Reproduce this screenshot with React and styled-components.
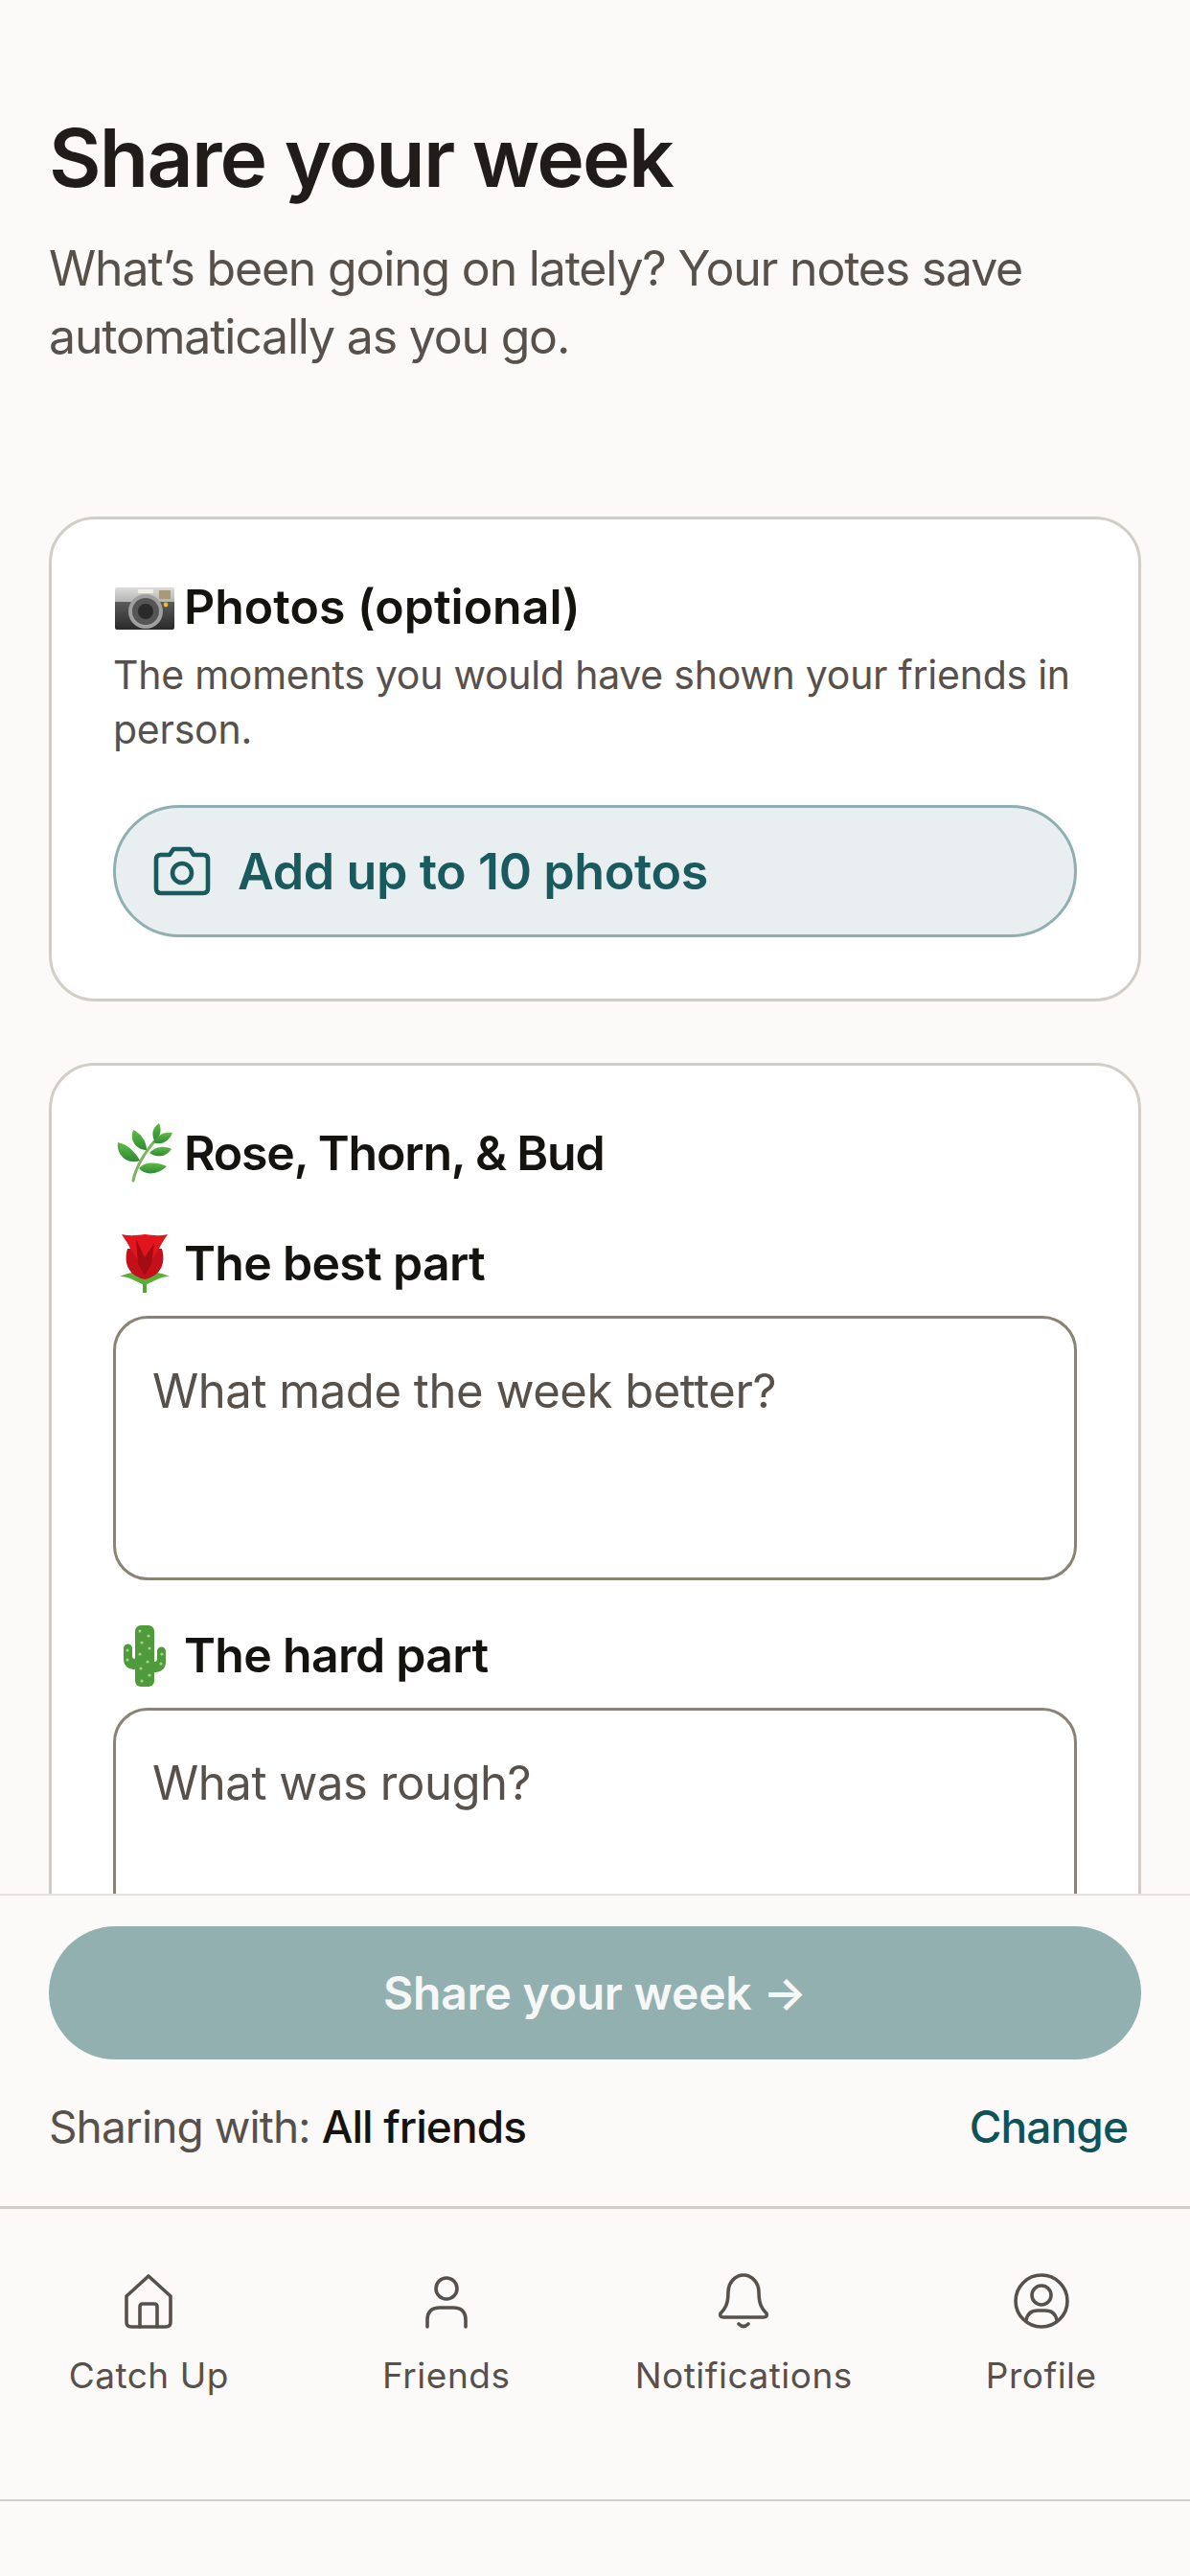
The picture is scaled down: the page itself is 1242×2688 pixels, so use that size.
import React from 'react';
import styled, { createGlobalStyle } from 'styled-components';

const GlobalStyle = createGlobalStyle`
  html, body { margin: 0; padding: 0; background: #fbfaf8; }
  * { box-sizing: border-box; }
  body { font-family: Inter, "Noto Sans", sans-serif; }
`;

const Page = styled.div`
  width: 1242px;
  height: 2688px;
  display: flex;
  flex-direction: column;
  background: #fbfaf8;
  overflow: hidden;
`;

const Scroll = styled.main`
  flex: 1;
  min-height: 0;
  overflow: hidden;
  padding: 115px 51px 0 51px;
`;

const Title = styled.h1`
  margin: 0;
  font-size: 84px;
  line-height: 100px;
  font-weight: 560;
  letter-spacing: -1.8px;
  color: #1f1c1a;
`;

const Intro = styled.p`
  margin: 30px 0 152px;
  font-size: 50px;
  line-height: 71px;
  font-weight: 400;
  letter-spacing: -1.2px;
  color: #57504b;
`;

const Card = styled.section`
  margin-bottom: 64px;
  padding: 58px 64px 64px;
  background: #fff;
  border: 3px solid #d2cec7;
  border-radius: 48px;
`;

const CardTitle = styled.h2`
  margin: 0;
  display: flex;
  align-items: center;
  gap: 8px;
  font-size: 50px;
  line-height: 58px;
  font-weight: 560;
  letter-spacing: ${(p) => p.$spacing}px;
  color: #15130f;
`;

const CardNote = styled.p`
  margin: 10px 0 0;
  font-size: 41px;
  line-height: 57px;
  letter-spacing: -0.25px;
  color: #57504b;
`;

const AddPhotos = styled.button`
  width: 100%;
  height: 138px;
  margin-top: 50px;
  padding: 0 0 0 39px;
  display: flex;
  align-items: center;
  gap: 28px;
  background: #e9eff1;
  border: 3px solid #8fb0b0;
  border-radius: 69px;
  font-family: inherit;
  font-size: 52px;
  font-weight: 560;
  letter-spacing: -0.4px;
  color: #195a5e;
`;

const FieldLabel = styled.label`
  margin-top: ${(p) => p.$top}px;
  display: flex;
  align-items: center;
  gap: 8px;
  font-size: 50px;
  line-height: 58px;
  font-weight: 560;
  letter-spacing: -0.7px;
  color: #15130f;
`;

const NoteBox = styled.textarea`
  display: block;
  width: 100%;
  height: 276px;
  margin-top: 22px;
  padding: 44px 38px;
  resize: none;
  background: #fff;
  border: 3px solid #8a8274;
  border-radius: 36px;
  outline: none;
  font-family: inherit;
  font-size: 49px;
  line-height: 64px;
  letter-spacing: -0.45px;
  &::placeholder {
    color: #57504b;
    opacity: 1;
  }
`;

const ShareBar = styled.div`
  height: 326px;
  flex: none;
  padding: 32px 51px 0 51px;
  background: #fbfaf8;
  border-top: 2px solid #e5e2dd;
`;

const ShareButton = styled.button`
  width: 100%;
  height: 139px;
  padding: 0;
  background: #93b0b1;
  border: none;
  border-radius: 70px;
  font-family: inherit;
  font-size: 48px;
  font-weight: 560;
  letter-spacing: -0.2px;
  color: #f6f8f7;
`;

const ShareMeta = styled.div`
  margin-top: 40px;
  padding-right: 14px;
  display: flex;
  justify-content: space-between;
  align-items: baseline;
  font-size: 46px;
  line-height: 60px;
  letter-spacing: -0.9px;
  color: #57504b;
`;

const Audience = styled.span`
  font-weight: 450;
  color: #15130f;
`;

const ChangeLink = styled.a`
  font-weight: 450;
  color: #0f5257;
`;

const Nav = styled.nav`
  height: 386px;
  flex: none;
  padding-bottom: 78px;
  background: #fbfaf8;
  border-top: 3px solid #d2cec7;
`;

const NavRow = styled.div`
  height: 100%;
  display: grid;
  grid-template-columns: repeat(4, 1fr);
  border-bottom: 2px solid #d2d0cc;
`;

const NavItem = styled.a`
  padding-top: 66px;
  display: flex;
  flex-direction: column;
  align-items: center;
  gap: 23px;
  font-size: 37px;
  line-height: 50px;
  font-weight: 430;
  letter-spacing: 0.5px;
  color: #57504b;
`;

const NavIcon = styled.svg`
  width: 60px;
  height: 60px;
  fill: none;
  stroke: #57504b;
  stroke-width: 3.6;
  stroke-linecap: round;
  stroke-linejoin: round;
`;

const Emoji = styled.svg`
  width: 66px;
  height: 66px;
  flex: none;
`;

function CameraEmoji() {
  return (
    <Emoji viewBox="0 0 66 66">
      <defs>
        <linearGradient id="camBody" x1="0" y1="0" x2="0" y2="1">
          <stop offset="0" stopColor="#dcdcda" />
          <stop offset="0.34" stopColor="#b5b5b3" />
          <stop offset="0.35" stopColor="#5a5a5a" />
          <stop offset="1" stopColor="#2a2a2a" />
        </linearGradient>
      </defs>
      <rect x="2" y="13" width="62" height="44" rx="2" fill="url(#camBody)" />
      <rect x="26" y="15" width="16" height="4" fill="#f2efe4" />
      <rect x="48" y="16" width="12" height="9" fill="#a89a78" />
      <circle cx="34" cy="38" r="18" fill="#a0a0a0" />
      <circle cx="34" cy="38" r="14" fill="#555" />
      <circle cx="34" cy="38" r="8" fill="#2a2a2a" />
      <circle cx="55" cy="31" r="2.4" fill="#efb92f" />
    </Emoji>
  );
}

function HerbEmoji() {
  const leaves = [
    'M28 41 C22 30 14 24 5 22 C3 34 14 46 28 41Z',
    'M35 30 C35 20 28 12 21 9 C17 20 24 30 35 30Z',
    'M43 20 C40 13 41 7 48 2 C51 9 50 16 43 20Z',
    'M42 22 C46 14 54 11 62 12 C59 20 51 26 42 22Z',
    'M38 33 C44 26 54 25 61 29 C55 38 45 38 38 33Z',
    'M27 49 C33 42 46 42 56 47 C47 56 33 57 27 49Z',
  ];
  return (
    <Emoji viewBox="0 0 66 66">
      <defs>
        <linearGradient id="leafFill" x1="0" y1="0" x2="0" y2="1">
          <stop offset="0" stopColor="#5fbc45" />
          <stop offset="1" stopColor="#2c8a33" />
        </linearGradient>
      </defs>
      <path d="M21 62 C24 47 32 34 44 20" fill="none" stroke="#7fb363" strokeWidth="3" strokeLinecap="round" />
      {leaves.map((d, i) => (
        <path key={i} d={d} fill="url(#leafFill)" />
      ))}
    </Emoji>
  );
}

function RoseEmoji() {
  return (
    <Emoji viewBox="0 0 66 66">
      <path d="M31 48 H35 V64 H31Z" fill="#55a533" />
      <path d="M7 47 C17 43 24 41 30 46 L33 38 L36 46 C42 41 49 43 59 47 C49 47 43 52 33 56 C23 52 17 47 7 47Z" fill="#5cae39" />
      <path d="M15 18 C11 32 15 46 33 50 C51 46 55 32 51 18Z" fill="#c4101a" />
      <path d="M9 3 C18 5 25 4 33 3 C41 4 49 5 57 3 C53 9 50 13 48 18 L40 30 L33 44 L26 30 L18 18 C16 13 13 9 9 3Z" fill="#e2151c" />
      <path d="M24 8 L33 27 L43 12 L40 34 L33 46 L26 34Z" fill="#a30c14" />
    </Emoji>
  );
}

function CactusEmoji() {
  return (
    <Emoji viewBox="0 0 66 66">
      <g fill="#4f9a3b">
        <rect x="23" y="2" width="20" height="64" rx="6" />
        <path d="M11 26 a4.5 4.5 0 0 1 9 0 V34 a3 3 0 0 0 3 3 H26 V48 H21 A10 10 0 0 1 11 38Z" />
        <path d="M55 29 a4.5 4.5 0 0 0 -9 0 V37 a3 3 0 0 1 -3 3 H40 V51 H45 A10 10 0 0 0 55 41Z" />
      </g>
      <g fill="#a7d08c">
        {[[28, 8], [37, 13], [30, 20], [38, 26], [28, 32], [36, 40], [29, 47], [38, 54], [30, 60], [15, 28], [15, 38], [51, 32], [50, 42]].map(([x, y]) => (
          <circle key={`${x}-${y}`} cx={x} cy={y} r="1.6" />
        ))}
      </g>
    </Emoji>
  );
}

export default function App() {
  return (
    <Page>
      <GlobalStyle />
      <Scroll>
        <Title>Share your week</Title>
        <Intro>
          What’s been going on lately? Your notes save
          <br />
          automatically as you go.
        </Intro>
        <Card>
          <CardTitle $spacing={0}>
            <CameraEmoji />
            Photos (optional)
          </CardTitle>
          <CardNote>The moments you would have shown your friends in person.</CardNote>
          <AddPhotos type="button">
            <svg width="60" height="52" viewBox="0 0 60 52" fill="none" stroke="#195a5e" strokeWidth="4.6" strokeLinejoin="round">
              <path d="M8 9 H17 L21 3 H38 L42 9 H52 Q57 9 57 14 V44 Q57 49 52 49 H8 Q3 49 3 44 V14 Q3 9 8 9Z" />
              <circle cx="30" cy="28" r="10" />
            </svg>
            Add up to 10 photos
          </AddPhotos>
        </Card>
        <Card>
          <CardTitle $spacing={-1.2}>
            <HerbEmoji />
            Rose, Thorn, &amp; Bud
          </CardTitle>
          <FieldLabel $top={49}>
            <RoseEmoji />
            The best part
          </FieldLabel>
          <NoteBox placeholder="What made the week better?" />
          <FieldLabel $top={45}>
            <CactusEmoji />
            The hard part
          </FieldLabel>
          <NoteBox placeholder="What was rough?" />
        </Card>
      </Scroll>
      <ShareBar>
        <ShareButton type="button">Share your week →</ShareButton>
        <ShareMeta>
          <span>
            Sharing with: <Audience>All friends</Audience>
          </span>
          <ChangeLink>Change</ChangeLink>
        </ShareMeta>
      </ShareBar>
      <Nav>
        <NavRow>
          <NavItem>
            <NavIcon viewBox="0 0 60 60">
              <path d="M7 25 L30 4 L53 25 V52 Q53 57 48 57 H12 Q7 57 7 52Z" />
              <path d="M21 57 V36 Q21 33 24 33 H36 Q39 33 39 36 V57" />
            </NavIcon>
            Catch Up
          </NavItem>
          <NavItem>
            <NavIcon viewBox="0 0 60 60">
              <circle cx="30" cy="17" r="11" />
              <path d="M10 57 V50 Q10 37 23 37 H37 Q50 37 50 50 V57" />
            </NavIcon>
            Friends
          </NavItem>
          <NavItem>
            <NavIcon viewBox="0 0 60 60">
              <path d="M14 21 A16 18 0 0 1 46 21 C46 33 49 38 54 43 Q55 47 51 47 H9 Q5 47 6 43 C11 38 14 33 14 21Z" />
              <path d="M25 54 Q30 59 35 54" />
            </NavIcon>
            Notifications
          </NavItem>
          <NavItem>
            <NavIcon viewBox="0 0 60 60">
              <circle cx="30" cy="30" r="27" />
              <circle cx="30" cy="24" r="10" />
              <path d="M14 50 Q16 40 26 40 H34 Q44 40 46 50" />
            </NavIcon>
            Profile
          </NavItem>
        </NavRow>
      </Nav>
    </Page>
  );
}
